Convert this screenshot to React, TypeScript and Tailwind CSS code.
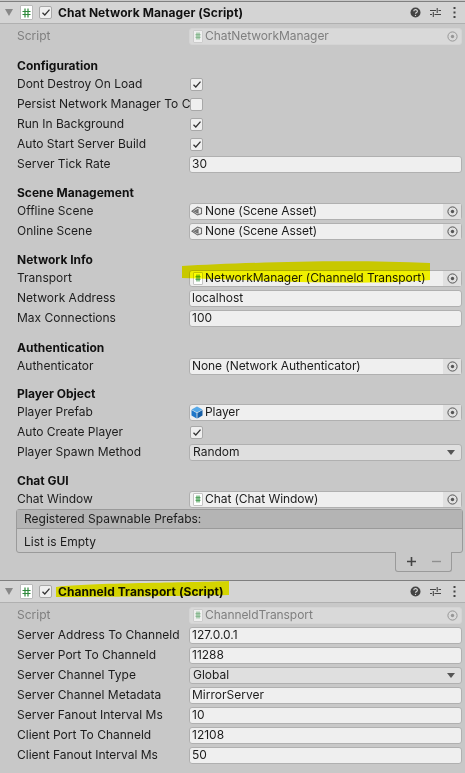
import React from "react";

const Csharp = ({ faded = false }: { faded?: boolean }) => (
  <span className={`inline-flex h-[13px] w-[10px] shrink-0 items-center justify-center rounded-[1px] border border-[#c4c4c4] bg-white ${faded ? "opacity-60" : ""}`}>
    <svg width="6" height="8" viewBox="0 0 6 8" fill="none" stroke="#3f9a4d" strokeWidth="1.1">
      <path d="M2 0.5V7.5M4 0.5V7.5M0.5 2.8H5.5M0.5 5.2H5.5" />
    </svg>
  </span>
);

const SceneIcon = () => (
  <svg width="12" height="12" viewBox="0 0 12 12" className="shrink-0" fill="none" stroke="#6b6b6b" strokeWidth="1.1">
    <path d="M1 6.2 6.5 2l4 1.5v5L6.5 10 1 6.2Z" />
    <path d="M3.5 6.2 7 4.4v3.6L3.5 6.2Z" fill="#8a8a8a" />
  </svg>
);

const PrefabIcon = () => (
  <svg width="12" height="13" viewBox="0 0 12 13" className="shrink-0">
    <path d="M6 0.5 11.5 3.5 6 6.5 0.5 3.5Z" fill="#55a8e8" />
    <path d="M0.5 4 5.6 7V12.5L0.5 9.5Z" fill="#1f77c9" />
    <path d="M11.5 4 6.4 7V12.5L11.5 9.5Z" fill="#155ea6" />
  </svg>
);

const Target = ({ faded = false }: { faded?: boolean }) => (
  <span className={`flex w-[18px] shrink-0 items-center justify-center self-stretch ${faded ? "opacity-50" : "bg-[#e0e0e0]"}`}>
    <svg width="11" height="11" viewBox="0 0 11 11" fill="none">
      <circle cx="5.5" cy="5.5" r="4.6" stroke="#555" strokeWidth="1" />
      <circle cx="5.5" cy="5.5" r="1.7" fill="#555" />
    </svg>
  </span>
);

const CheckBox = ({ checked = true }: { checked?: boolean }) => (
  <span className="flex h-[13px] w-[13px] items-center justify-center rounded-[2px] border border-[#a8a8a8] bg-[#efefef]">
    {checked && (
      <svg width="10" height="9" viewBox="0 0 10 9" fill="none" stroke="#333" strokeWidth="1.3">
        <path d="M1.5 4.8 3.8 7 8.5 1.6" />
      </svg>
    )}
  </span>
);

const Row = ({ label, faded, children }: { label: string; faded?: boolean; children?: React.ReactNode }) => (
  <div className="flex h-[20px] items-center">
    <div className={`w-[189px] shrink-0 whitespace-nowrap pl-[17px] ${faded ? "text-[#7f7f7f]" : "text-[#1c1c1c]"}`}>{label}</div>
    <div className="flex min-w-0 flex-1 items-center pr-[3px]">{children}</div>
  </div>
);

const Field = ({ value }: { value: string }) => (
  <div className="flex h-[17px] w-full items-center rounded-[3px] border border-[#b0b0b0] bg-[#efefef] pl-[2px] text-[#1c1c1c]">{value}</div>
);

const Obj = ({ icon, value, faded }: { icon?: React.ReactNode; value: string; faded?: boolean }) => (
  <div className={`flex h-[17px] w-full items-center rounded-[3px] border ${faded ? "border-[#d4d4d4] bg-[#d9d9d9] text-[#7f7f7f]" : "border-[#b0b0b0] bg-[#efefef] text-[#1c1c1c]"}`}>
    {icon ? <span className="flex w-[14px] shrink-0 justify-end pr-[1px]">{icon}</span> : <span className="w-[1px] shrink-0" />}
    <span className="ml-[1px] min-w-0 flex-1 whitespace-nowrap tracking-[-0.07px]">{value}</span>
    <Target faded={faded} />
  </div>
);

const Select = ({ value }: { value: string }) => (
  <div className="flex h-[17px] w-full items-center justify-between rounded-[3px] border border-[#b0b0b0] bg-[#dfdfdf] pl-[3px] pr-[6px] text-[#1c1c1c]">
    {value}
    <span className="h-0 w-0 border-x-[4px] border-t-[5px] border-x-transparent border-t-[#555]" />
  </div>
);

const Section = ({ title, className }: { title: string; className: string }) => (
  <div className={`flex h-[18px] items-center pl-[17px] pt-[2px] font-bold text-[#111] ${className}`}>{title}</div>
);

const Header = ({ title }: { title: string }) => (
  <div className="flex h-[23px] items-center border-y border-t-[#7f7f7f] border-b-[#b0b0b0] bg-[#d4d4d4] pl-[5px]">
    <span className="h-0 w-0 border-x-[4px] border-t-[7px] border-x-transparent border-t-[#888]" />
    <span className="ml-[7px] flex h-[15px] w-[13px] items-center justify-center rounded-[1px] border border-[#bbb] bg-white">
      <svg width="9" height="10" viewBox="0 0 9 10" fill="none" stroke="#2f8a3c" strokeWidth="1.2">
        <path d="M3 0.5V9.5M6 0.5V9.5M0.5 3.5H8.5M0.5 6.5H8.5" />
      </svg>
    </span>
    <span className="ml-[6px]"><CheckBox /></span>
    <span className="ml-[6px] flex-1 whitespace-nowrap font-bold tracking-[0.07px] text-[#111]">{title}</span>
    <svg width="11" height="11" viewBox="0 0 11 11" className="mr-[9px]">
      <circle cx="5.5" cy="5.5" r="5" fill="#444" />
      <path d="M3.8 4.2a1.8 1.6 0 1 1 2.6 1.4c-.6.3-.9.6-.9 1.2" fill="none" stroke="#d4d4d4" strokeWidth="1.2" />
      <circle cx="5.5" cy="8.4" r=".7" fill="#d4d4d4" />
    </svg>
    <svg width="11" height="11" viewBox="0 0 11 11" className="mr-[12px]" fill="none" stroke="#444" strokeWidth="1.1">
      <path d="M0 3.5H6M8.5 3.5H11M7.2 1V6M0 7.5H2M4.5 7.5H11M3.3 5V10" />
    </svg>
    <svg width="3" height="11" viewBox="0 0 3 11" className="mr-[9px]" fill="#444">
      <rect x=".5" y="0" width="2" height="2" />
      <rect x=".5" y="4.5" width="2" height="2" />
      <rect x=".5" y="9" width="2" height="2" />
    </svg>
  </div>
);

export default function App() {
  return (
    <div className="relative h-[773px] w-[465px] overflow-hidden bg-[#c8c8c8] pt-[1px] text-[12px] leading-[14px]" style={{ fontFamily: "Inter, 'Liberation Sans', sans-serif" }}>
      <Header title="Chat Network Manager (Script)" />
      <div className="pt-[2px]">
        <Row label="Script" faded><Obj faded icon={<Csharp faded />} value="ChatNetworkManager" /></Row>
      </div>
      <Section className="mt-[10px]" title="Configuration" />
      <Row label="Dont Destroy On Load"><span className="ml-[1px]"><CheckBox /></span></Row>
      <Row label="Persist Network Manager To C"><span className="ml-[1px]"><CheckBox checked={false} /></span></Row>
      <Row label="Run In Background"><span className="ml-[1px]"><CheckBox /></span></Row>
      <Row label="Auto Start Server Build"><span className="ml-[1px]"><CheckBox /></span></Row>
      <Row label="Server Tick Rate"><Field value="30" /></Row>
      <Section className="mt-[9px]" title="Scene Management" />
      <Row label="Offline Scene"><Obj icon={<SceneIcon />} value="None (Scene Asset)" /></Row>
      <Row label="Online Scene"><Obj icon={<SceneIcon />} value="None (Scene Asset)" /></Row>
      <Section className="mt-[9px]" title="Network Info" />
      <Row label="Transport"><Obj icon={<Csharp />} value="NetworkManager (Channeld Transport)" /></Row>
      <Row label="Network Address"><Field value="localhost" /></Row>
      <Row label="Max Connections"><Field value="100" /></Row>
      <Section className="mt-[10px]" title="Authentication" />
      <Row label="Authenticator"><Obj value="None (Network Authenticator)" /></Row>
      <Section className="mt-[8px]" title="Player Object" />
      <Row label="Player Prefab"><Obj icon={<PrefabIcon />} value="Player" /></Row>
      <Row label="Auto Create Player"><span className="ml-[1px]"><CheckBox /></span></Row>
      <Row label="Player Spawn Method"><Select value="Random" /></Row>
      <Section className="mt-[9px]" title="Chat GUI" />
      <Row label="Chat Window"><Obj icon={<Csharp />} value="Chat (Chat Window)" /></Row>

      <div className="relative ml-[16px] mr-[2px] h-[44px] rounded-[3px] border border-[#9a9a9a]">
        <div className="flex h-[19px] items-center border-b border-[#9a9a9a] bg-[#b4b4b4] pl-[7px] text-[#1c1c1c]">Registered Spawnable Prefabs:</div>
        <div className="flex h-[23px] items-center pl-[7px] pt-[2px] text-[#1c1c1c]">List is Empty</div>
        <div className="absolute right-[10px] top-[42px] flex h-[20px] w-[57px] items-center justify-center gap-[15px] rounded-b-[3px] border border-t-0 border-[#9a9a9a] bg-[#c8c8c8]">
          <svg width="11" height="11" viewBox="0 0 11 11" stroke="#444" strokeWidth="1.6"><path d="M5.5 1V10M1 5.5H10" /></svg>
          <svg width="9" height="9" viewBox="0 0 9 9" stroke="#8f8f8f" strokeWidth="1.4"><path d="M0 4.5H9" /></svg>
        </div>
      </div>

      <div className="mt-[27px]"><Header title="Channeld Transport (Script)" /></div>
      <div className="pt-[2px]">
        <Row label="Script" faded><Obj faded icon={<Csharp faded />} value="ChanneldTransport" /></Row>
      </div>
      <Row label="Server Address To Channeld"><Field value="127.0.0.1" /></Row>
      <Row label="Server Port To Channeld"><Field value="11288" /></Row>
      <Row label="Server Channel Type"><Select value="Global" /></Row>
      <Row label="Server Channel Metadata"><Field value="MirrorServer" /></Row>
      <Row label="Server Fanout Interval Ms"><Field value="10" /></Row>
      <Row label="Client Port To Channeld"><Field value="12108" /></Row>
      <Row label="Client Fanout Interval Ms"><Field value="50" /></Row>

      <svg width="465" height="773" viewBox="0 0 465 773" className="pointer-events-none absolute left-0 top-0 mix-blend-multiply">
        <path d="M182 266C240 263 340 259 430 263V280C380 284 320 283 270 281L182 278Z" fill="#ffff00" />
        <path d="M56 587C80 583 180 583 229 581V595C180 596 100 597 56 597Z" fill="#ffff00" />
      </svg>
    </div>
  );
}
